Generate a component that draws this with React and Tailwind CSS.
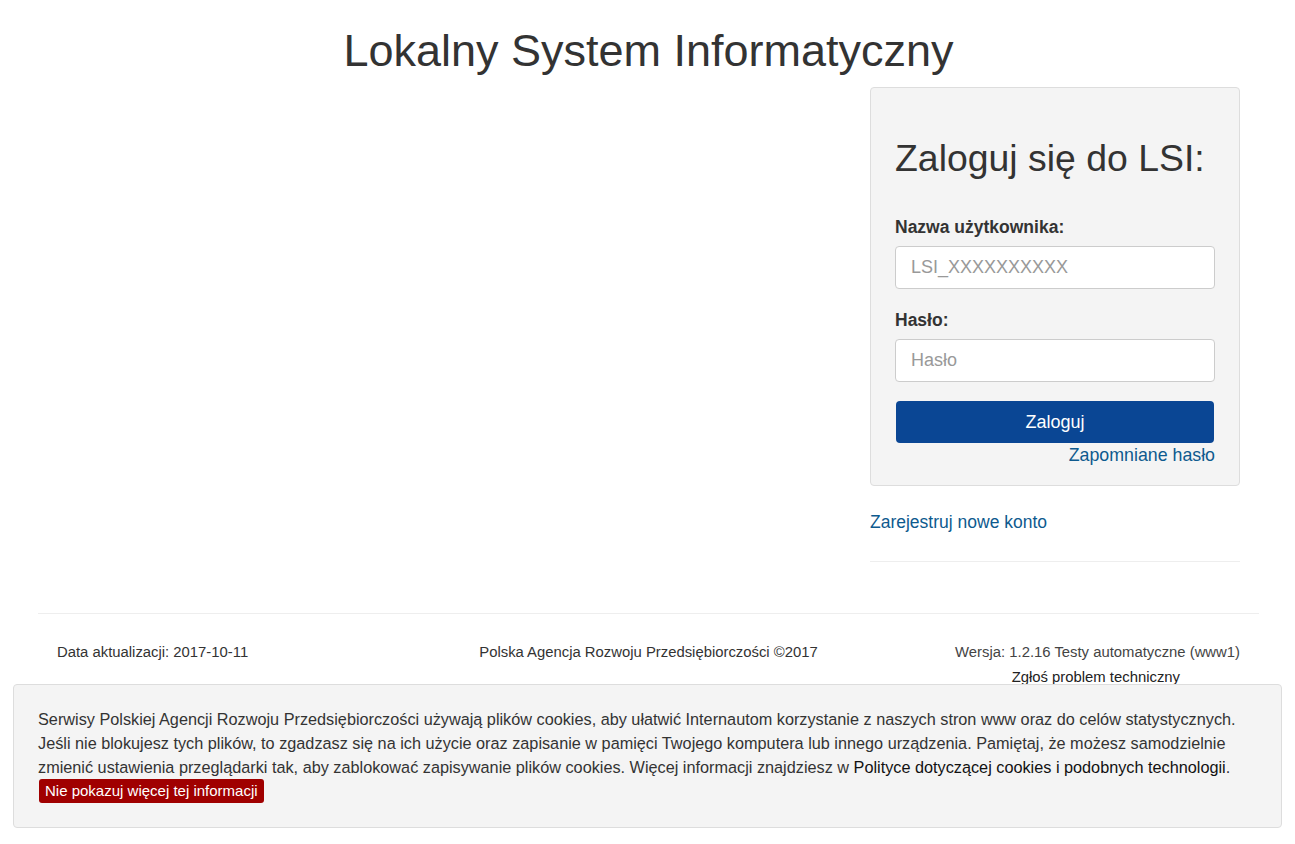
export default function App() {
  return (
    <div
      className="min-h-[844px] bg-white text-[#333]"
      style={{ fontFamily: '"Liberation Sans", Arial, sans-serif' }}
    >
      <div className="pl-[38px] pr-[36px]">
        <h1 className="pt-[26px] text-center text-[45px] font-normal leading-[50px] text-[#333]">
          Lokalny System Informatyczny
        </h1>

        <div className="flex justify-end px-[19px] pt-[11px]">
          <div className="w-[370px]">
            <div className="rounded-[4px] border border-[#ddd] bg-[#f4f4f4] px-[24px] pb-[18px] pt-[49px]">
              <h2 className="text-[37.4px] font-normal leading-[42px] text-[#333]">
                Zaloguj się do LSI:
              </h2>
              <label className="mt-[36px] block text-[17.5px] font-bold leading-[24px] text-[#333]">
                Nazwa użytkownika:
              </label>
              <input
                type="text"
                placeholder="LSI_XXXXXXXXXX"
                className="mt-[7px] block h-[43px] w-full rounded-[4px] border border-[#ccc] bg-white px-[15px] text-[18px] text-[#555] outline-none placeholder:text-[#999]"
              />
              <label className="mt-[19px] block text-[17.5px] font-bold leading-[24px] text-[#333]">
                Hasło:
              </label>
              <input
                type="password"
                placeholder="Hasło"
                className="mt-[7px] block h-[43px] w-full rounded-[4px] border border-[#ccc] bg-white px-[15px] text-[18px] text-[#555] outline-none placeholder:text-[#999]"
              />
              <button className="mx-px mt-[19px] block h-[42px] w-[318px] rounded-[4px] bg-[#0a4694] text-[18px] leading-[42px] text-white">
                Zaloguj
              </button>
              <div className="text-right text-[17.8px] leading-[24px]">
                <a href="#" className="text-[#0e5a8e]">
                  Zapomniane hasło
                </a>
              </div>
            </div>
            <div className="mt-[24px] text-[17.5px] leading-[24px]">
              <a href="#" className="text-[#0e5a8e]">
                Zarejestruj nowe konto
              </a>
            </div>
            <div className="mt-[27px] h-px bg-[#eee]" />
          </div>
        </div>

        <div className="mt-[51px] h-px bg-[#eee]" />

        <div className="px-[19px] pt-[26px] text-[14.85px] leading-[25px]">
          <div className="flex items-start justify-between">
            <div className="w-[360px] text-[#333]">Data aktualizacji: 2017-10-11</div>
            <div className="text-center text-[#333]">
              Polska Agencja Rozwoju Przedsiębiorczości ©2017
            </div>
            <div className="flex w-[360px] flex-col items-end text-[#444]">
              <div>Wersja: 1.2.16 Testy automatyczne (www1)</div>
              <a href="#" className="mr-[60px] text-[#222]">
                Zgłoś problem techniczny
              </a>
            </div>
          </div>
        </div>
      </div>

      <div className="fixed bottom-[16px] left-[13px] right-[13px] rounded-[4px] border border-[#ddd] bg-[#f4f4f4] px-[24px] pb-[24px] pt-[22px] text-[16.25px] leading-[24px] text-[#333]">
        <p className="whitespace-nowrap">
          Serwisy Polskiej Agencji Rozwoju Przedsiębiorczości używają plików cookies, aby ułatwić Internautom korzystanie z naszych stron www oraz do celów statystycznych.
          <br />
          Jeśli nie blokujesz tych plików, to zgadzasz się na ich użycie oraz zapisanie w pamięci Twojego komputera lub innego urządzenia. Pamiętaj, że możesz samodzielnie
          <br />
          zmienić ustawienia przeglądarki tak, aby zablokować zapisywanie plików cookies. Więcej informacji znajdziesz w{' '}
          <a href="#" className="text-[#111]">
            Polityce dotyczącej cookies i podobnych technologii
          </a>
          .
        </p>
        <button className="ml-px block h-[24px] rounded-[3px] bg-[#a00000] px-[6px] text-[15px] leading-[24px] text-white">
          Nie pokazuj więcej tej informacji
        </button>
      </div>
    </div>
  );
}
